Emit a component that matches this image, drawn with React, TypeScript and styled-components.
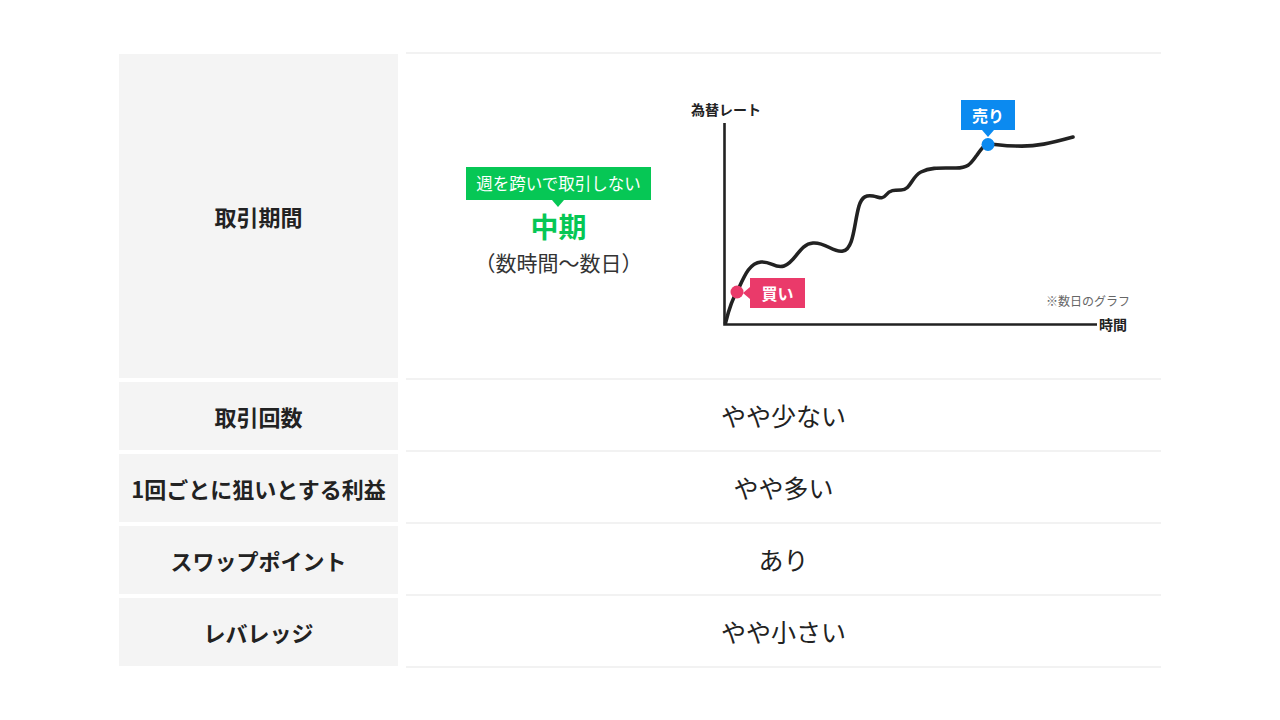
import styled, { createGlobalStyle } from 'styled-components'

const GlobalStyle = createGlobalStyle`
	body {
		margin: 0;
		background: #ffffff;
		font-family: 'Noto Sans CJK JP', 'Noto Sans', sans-serif;
		color: #222222;
	}
`

const rows = [
	{ label: '取引回数', value: 'やや少ない' },
	{ label: '1回ごとに狙いとする利益', value: 'やや多い' },
	{ label: 'スワップポイント', value: 'あり' },
	{ label: 'レバレッジ', value: 'やや小さい' },
]

// curve drawn in page coordinates (viewBox matches chart's place on the page)
const curve =
	'M724.5 322 C 728 308, 731 298, 736 291 C 743 276, 748 262, 760 261 C 770 260, 774 268, 783 265 C 795 261, 798 243, 812 242 C 825 241, 832 252, 842 250 C 853 248, 853 222, 858 205 C 861 195, 866 194, 872 195 C 878 196, 881 199, 885 194 C 889 189, 893 189, 900 189 C 910 189, 910 176, 920 171 C 930 166, 940 167, 955 167 C 968 167, 970 162, 976 154 C 980 148, 983 144, 987 143 C 995 143, 1000 145, 1015 145 C 1035 146, 1050 142, 1072 136'

export default function App() {
	return (
		<>
			<GlobalStyle />
			<Page>
				<Table>
					<Row>
						<Label>取引期間</Label>
						<Value first tall>
							<Period>
								<PeriodBadge>週を跨いで取引しない</PeriodBadge>
								<PeriodName>中期</PeriodName>
								<PeriodNote>（数時間〜数日）</PeriodNote>
							</Period>
							<Chart>
								<svg width="460" height="250" viewBox="680 90 460 250">
									<path
										d="M723.5 122 V 323.5 H 1096"
										fill="none"
										stroke="#222"
										strokeWidth="2.6"
									/>
									<path
										d={curve}
										fill="none"
										stroke="#222"
										strokeWidth="3.6"
										strokeLinecap="round"
									/>
									<circle cx="736" cy="291" r="6.5" fill="#ea3a6a" />
									<circle cx="987" cy="143.5" r="6.5" fill="#0b8af0" />
								</svg>
								<AxisLabel style={{ left: 10, top: 9 }}>為替レート</AxisLabel>
								<AxisLabel style={{ left: 418, top: 224 }}>時間</AxisLabel>
								<ChartNote>※数日のグラフ</ChartNote>
								<BuyTag>買い</BuyTag>
								<SellTag>売り</SellTag>
							</Chart>
						</Value>
					</Row>
					{rows.map((r) => (
						<Row key={r.label}>
							<Label>{r.label}</Label>
							<Value>{r.value}</Value>
						</Row>
					))}
				</Table>
			</Page>
		</>
	)
}

const Page = styled.div`
	padding: 52px 0 40px;
`
const Table = styled.div`
	width: 1042px;
	margin: 0 auto;
	display: flex;
	flex-direction: column;
`
const Row = styled.div`
	display: grid;
	grid-template-columns: 279px 755px;
	column-gap: 8px;
`
const Label = styled.div`
	margin: 2px 0;
	background: #f4f4f4;
	display: flex;
	align-items: center;
	justify-content: center;
	font-size: 22px;
	font-weight: 700;
	color: #222222;
`
const Value = styled.div<{ first?: boolean; tall?: boolean }>`
	box-sizing: border-box;
	height: ${(p) => (p.tall ? '328px' : '72px')};
	border-top: ${(p) => (p.first ? '2px solid #f2f2f2' : 'none')};
	border-bottom: 2px solid #f2f2f2;
	display: flex;
	align-items: center;
	justify-content: ${(p) => (p.tall ? 'flex-start' : 'center')};
	padding-left: ${(p) => (p.tall ? '40px' : '0')};
	font-size: 25px;
	color: #222222;
`
const Period = styled.div`
	width: 225px;
	display: flex;
	flex-direction: column;
	align-items: center;
	margin-top: 10px;
`
const PeriodBadge = styled.div`
	position: relative;
	background: #06c755;
	color: #ffffff;
	font-size: 16.5px;
	line-height: 33px;
	height: 33px;
	padding: 0 10px;
	&::after {
		content: '';
		position: absolute;
		left: 50%;
		bottom: -7px;
		margin-left: -6px;
		border-left: 6px solid transparent;
		border-right: 6px solid transparent;
		border-top: 7px solid #06c755;
	}
`
const PeriodName = styled.div`
	margin-top: 8px;
	font-size: 28px;
	line-height: 36px;
	font-weight: 700;
	color: #06c755;
`
const PeriodNote = styled.div`
	margin-top: 4px;
	font-size: 21px;
	line-height: 28px;
	color: #333333;
`
const Chart = styled.div`
	position: relative;
	width: 460px;
	height: 250px;
	margin-left: 10px;
	svg {
		display: block;
	}
`
const AxisLabel = styled.div`
	position: absolute;
	font-size: 14px;
	line-height: 18px;
	font-weight: 700;
	color: #222222;
`
const ChartNote = styled.div`
	position: absolute;
	left: 365px;
	top: 202px;
	font-size: 12px;
	line-height: 16px;
	color: #666666;
`
const Tag = styled.div`
	position: absolute;
	width: 55px;
	height: 30px;
	line-height: 30px;
	text-align: center;
	font-size: 16px;
	font-weight: 700;
	color: #ffffff;
`
const BuyTag = styled(Tag)`
	left: 69px;
	top: 187px;
	background: #ea3a6a;
	&::before {
		content: '';
		position: absolute;
		left: -7px;
		top: 50%;
		margin-top: -6px;
		border-top: 6px solid transparent;
		border-bottom: 6px solid transparent;
		border-right: 7px solid #ea3a6a;
	}
`
const SellTag = styled(Tag)`
	left: 280px;
	top: 9px;
	width: 54px;
	background: #0b8af0;
	&::after {
		content: '';
		position: absolute;
		left: 50%;
		bottom: -7px;
		margin-left: -6px;
		border-left: 6px solid transparent;
		border-right: 6px solid transparent;
		border-top: 7px solid #0b8af0;
	}
`
